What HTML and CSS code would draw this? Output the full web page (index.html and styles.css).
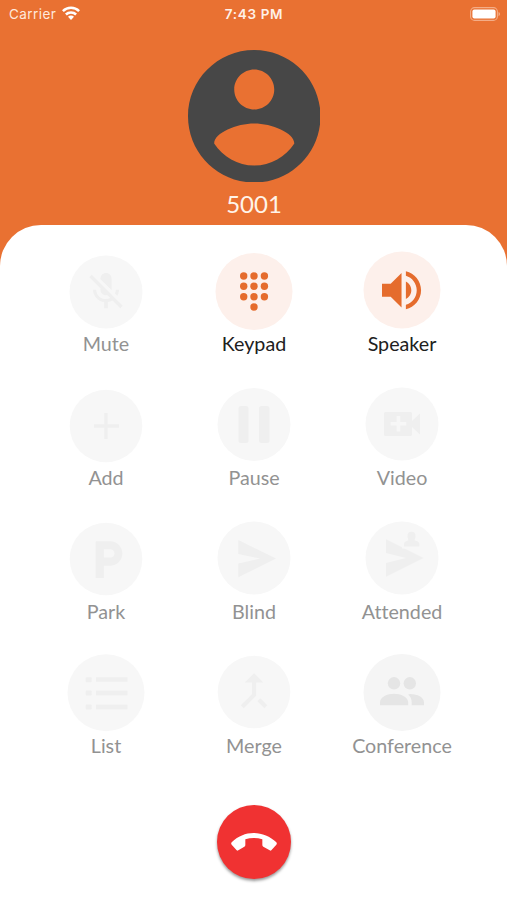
FILE: index.html
```html
<!DOCTYPE html>
<html lang="en">
<head>
<meta charset="utf-8">
<title>Call</title>
<link rel="stylesheet" href="styles.css">
</head>
<body>
<header class="statusbar">
  <div class="carrier"><span>Carrier</span>
    <svg width="18" height="14" viewBox="0 0 18 14"><g fill="none" stroke="currentColor" stroke-width="2.5"><path d="M.9 5.2a11.5 11.5 0 0 1 16.2 0"/><path d="M3.9 8.5a7.2 7.2 0 0 1 10.2 0"/></g><path fill="currentColor" d="M9 14l-3-3.2a4.2 4.2 0 0 1 6 0z"/></svg>
  </div>
  <div class="time">7:43 PM</div>
  <div class="battery">
    <svg width="31" height="14" viewBox="0 0 31 14"><rect x=".6" y=".6" width="26.8" height="12.8" rx="4" fill="none" stroke="currentColor" stroke-opacity=".5" stroke-width="1.1"/><rect x="2.4" y="2.4" width="23.2" height="9.2" rx="2" fill="#fff"/><path d="M28.5 5v4.2q1.6-.6 1.6-2.1T28.5 5z" fill="currentColor" opacity=".5"/></svg>
  </div>
</header>
<section class="caller">
  <svg class="avatar" viewBox="2 2 20 20"><path d="M12 2C6.48 2 2 6.48 2 12s4.48 10 10 10 10-4.48 10-10S17.52 2 12 2zm0 2.95c1.66 0 3.02 1.34 3.02 3s-1.36 3.02-3.02 3.02-3.02-1.36-3.02-3.02 1.36-3 3.02-3zm0 14.5c-2.5 0-4.75-1.4-6.05-3.35.03-1.6 3.4-3 6.05-3s6.02 1.4 6.05 3c-1.3 1.95-3.55 3.35-6.05 3.35z"/></svg>
  <div class="number">5001</div>
</section>
<main class="panel">
  <div class="actions">
    <button class="action"><svg viewBox="0 0 84 84"><circle class="disc" cx="42" cy="42" r="36.5"/><path class="glyph" transform="translate(19.8 19.3) scale(1.85)" d="M19 11h-1.7c0 .74-.16 1.43-.43 2.05l1.23 1.23c.56-.98.9-2.09.9-3.28zm-4.02.17c0-.06.02-.11.02-.17V5c0-1.66-1.34-3-3-3S9 3.34 9 5v.18l5.98 5.99zM4.27 3L3 4.27l6.01 6.01V11c0 1.66 1.33 3 2.99 3 .22 0 .44-.03.65-.08l1.66 1.66c-.71.33-1.5.52-2.31.52-2.76 0-5.3-2.1-5.3-5.1H5c0 3.41 2.72 6.23 6 6.72V21h2v-3.28c.91-.13 1.77-.45 2.54-.9L19.73 21 21 19.73 4.27 3z"/></svg><span>Mute</span></button>
    <button class="action on"><svg viewBox="0 0 84 84"><circle class="disc" cx="42" cy="41.5" r="38.5"/><g class="glyph"><circle cx="31.7" cy="26" r="3.7"/><circle cx="42" cy="26" r="3.7"/><circle cx="52.4" cy="26" r="3.7"/><circle cx="31.7" cy="36.3" r="3.7"/><circle cx="42" cy="36.3" r="3.7"/><circle cx="52.4" cy="36.3" r="3.7"/><circle cx="31.7" cy="46.7" r="3.7"/><circle cx="42" cy="46.7" r="3.7"/><circle cx="52.4" cy="46.7" r="3.7"/><circle cx="42" cy="57" r="3.7"/></g></svg><span>Keypad</span></button>
    <button class="action on"><svg viewBox="0 0 84 84"><circle class="disc" cx="42" cy="40" r="38.5"/><path class="glyph" transform="translate(15.5 14.2) scale(2.17)" d="M3 9v6h4l5 5V4L7 9H3zm13.5 3c0-1.77-1.02-3.29-2.5-4.03v8.05c1.48-.73 2.5-2.25 2.5-4.02zM14 3.23v2.06c2.89.86 5 3.54 5 6.71s-2.11 5.85-5 6.71v2.06c4.01-.91 7-4.49 7-8.77s-2.99-7.86-7-8.77z"/></svg><span>Speaker</span></button>

    <button class="action"><svg viewBox="0 0 84 84"><circle class="disc" cx="42" cy="42" r="36.3"/><path class="glyph" d="M40.3 29h3.400v11.300H55v3.400H43.700V55h-3.400V43.700H30v-3.400h10.300z"/></svg><span>Add</span></button>
    <button class="action"><svg viewBox="0 0 84 84"><circle class="disc" cx="42" cy="40.5" r="36.5"/><g class="glyph"><rect x="26.5" y="22" width="10" height="37" rx="2.5"/><rect x="47" y="22" width="10.5" height="37" rx="2.5"/></g></svg><span>Pause</span></button>
    <button class="action"><svg viewBox="0 0 84 84"><circle class="disc" cx="42" cy="40" r="36.5"/><path class="glyph" fill-rule="evenodd" d="M25.5 28H50.500q1.500 0 1.500 1.500V37l8-7.500v21L52 43v7.500q0 1.500-1.500 1.500h-25q-1.500 0-1.500-1.500v-21q0-1.500 1.500-1.500zM36.700 32v6h-6v3.500h6v6h3.500v-6h6V38h-6v-6z"/></svg><span>Video</span></button>

    <button class="action"><svg viewBox="0 0 84 84"><circle class="disc" cx="42" cy="41" r="36.3"/><path class="glyph" transform="translate(19.4 17) scale(2.05)" d="M13 3H6v18h4v-6h3c3.310 0 6-2.690 6-6s-2.690-6-6-6zm.2 8H10V7h3.200c1.100 0 2 .9 2 2s-.9 2-2 2z"/></svg><span>Park</span></button>
    <button class="action"><svg viewBox="0 0 84 84"><circle class="disc" cx="42" cy="40" r="36.5"/><path class="glyph" d="M26.300 22L64 40.600 26.300 59.300V45.500l22-4.900-22-4.700z"/></svg><span>Blind</span></button>
    <button class="action"><svg viewBox="0 0 84 84"><circle class="disc" cx="42" cy="40" r="36.5"/><path class="glyph" d="M26 21.300L63.500 40 26 58.700V45l20-5-20-5z"/><path class="disc" d="M42 30.500V24l4-4V12h11v8l4 4v6.500z"/><path class="glyph" d="M44 28.500v-2.700q0-2.400 4.500-3.500-1-1.500-1-4.500 0-4 4-4t4 4q0 3-1 4.500 4.800 1.100 4.800 3.500v2.700z"/></svg><span>Attended</span></button>

    <button class="action"><svg viewBox="0 0 84 84"><circle class="disc" cx="42" cy="40.7" r="38.5"/><g class="glyph"><rect x="21.7" y="25.2" width="6" height="5" rx="1"/><rect x="32" y="25.2" width="31.5" height="4.6"/><rect x="21.7" y="38.5" width="6" height="5" rx="1"/><rect x="32" y="38.7" width="31.5" height="4.6"/><rect x="21.7" y="52.5" width="6" height="5" rx="1"/><rect x="32" y="52.7" width="31.5" height="4.6"/></g></svg><span>List</span></button>
    <button class="action"><svg viewBox="0 0 84 84"><circle class="disc" cx="42" cy="40" r="36.3"/><path class="glyph" transform="translate(17.2 14) scale(2.07)" d="M17 20.410L18.410 19 15 15.590 13.590 17 17 20.410zM7.500 8H11v5.590L5.590 19 7 20.410l6-6V8h3.500L12 3.500 7.500 8z"/></svg><span>Merge</span></button>
    <button class="action strong"><svg viewBox="0 0 84 84"><circle class="disc" cx="42" cy="40.5" r="38.5"/><g class="glyph"><circle cx="34" cy="31.3" r="6.2"/><circle cx="49.8" cy="31.3" r="6.2"/><path d="M20 53.300V50.500C20 44.500 27.500 41.700 34 41.700S48.200 44.500 48.200 50.500v2.800zM50.200 42C57.500 42.300 64 45 64 50.500v2.800H51.700V50.500q0-5-3.500-8z"/></g></svg><span>Conference</span></button>
  </div>
  <button class="hangup" aria-label="End call"><svg width="46" height="18" viewBox="94 128 138 54"><path fill="#fff" d="M96 156C114 138 138 128 162 128S212 138 230 156Q233 160 230 163L215 180Q213 182 210 180L191 169Q188 167 188 164V147Q162 139 137 147V164Q137 167 134 169L116 180Q113 182 111 180L96 163Q93 160 96 156Z"/></svg></button>
</main>
</body>
</html>
```
FILE: styles.css
```css
* { box-sizing: border-box; }
body {
  margin: 0;
  height: 900px;
  display: flex;
  flex-direction: column;
  background: #e97132;
  font-family: Lato, sans-serif;
  overflow: hidden;
}
.statusbar {
  height: 28px;
  padding: 0 6px 0 9px;
  display: grid;
  grid-template-columns: 1fr auto 1fr;
  align-items: center;
  color: #ffe9dc;
  font: 13.5px/28px Inter, sans-serif;
}
.carrier { display: flex; align-items: center; gap: 6px; letter-spacing: .45px; }
.carrier svg { color: #fff; margin-bottom: 2px; }
.time { font-weight: 600; letter-spacing: .65px; padding-right: 2px; color: #fff1e8; }
.battery { display: flex; justify-content: flex-end; padding-bottom: 1px; }
.caller {
  height: 197px;
  flex: none;
  padding: 21.5px 0 0 1px;
  display: flex;
  flex-direction: column;
  align-items: center;
}
.avatar { width: 132.5px; height: 132.5px; flex: none; fill: #474747; }
.number { margin-top: 8px; font-size: 24px; line-height: 28px; color: #fff4ea; }
.panel {
  flex: 1;
  background: #fff;
  border-radius: 41px 41px 0 0;
  padding: 25px 0 0 1px;
  display: flex;
  flex-direction: column;
  align-items: center;
}
.actions {
  display: grid;
  grid-template-columns: repeat(3, 148px);
  grid-auto-rows: 134px;
}
button { border: 0; padding: 0; background: none; font: inherit; }
.action {
  display: flex;
  flex-direction: column;
  align-items: center;
  color: #929292;
  font-size: 19.7px;
  line-height: 22px;
  font-variant-ligatures: none;
}
.action svg { width: 84px; height: 84px; flex: none; }
.action span { margin-top: -1px; }
.disc { fill: #f7f7f7; }
.glyph { fill: #efefef; }
.strong .disc { fill: #f5f5f5; }
.strong .glyph { fill: #e5e5e5; }
.on { color: #202020; }
.on .disc { fill: #fdf0eb; }
.on .glyph { fill: #e56c2d; }
.hangup {
  width: 74px;
  height: 74px;
  margin-top: 19px;
  border-radius: 50%;
  background: #f03232;
  box-shadow: 0 2px 3px rgba(0, 0, 0, .4);
  display: flex;
  align-items: center;
  justify-content: center;
}
```
